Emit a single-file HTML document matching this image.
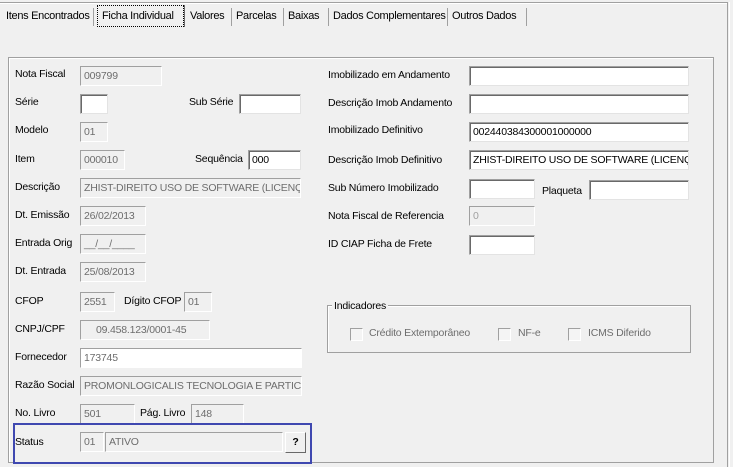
<!DOCTYPE html>
<html><head><meta charset="utf-8"><style>
*{box-sizing:border-box;margin:0;padding:0}
body{width:733px;height:467px;background:#f0f0f0;font-family:"Liberation Sans",sans-serif;font-size:10.5px;letter-spacing:-0.2px;color:#000;position:relative;overflow:hidden}
.a{position:absolute;white-space:nowrap}
.l{position:absolute;white-space:nowrap;line-height:13px}
.i{position:absolute;height:20px;border:1px solid;border-color:#a0a0a0 #e3e3e3 #e3e3e3 #a0a0a0;background:#fff;box-shadow:inset 1px 1px 0 #696969;padding:3px 0 0 3px;line-height:13px;overflow:hidden;white-space:nowrap}
.d{background:#f0f0f0;color:#6d6d6d;box-shadow:none;border-color:#a0a0a0 #fff #fff #a0a0a0}
.tab{position:absolute;top:8px;height:18px;line-height:16px;padding:0 4px;border-right:1px solid #a0a0a0;white-space:nowrap;overflow:hidden;font-size:11px;letter-spacing:-0.3px}
.cb{position:absolute;width:13px;height:13px;border:1px solid #a0a0a0;background:#f4f4f4;border-bottom-color:#fff;border-right-color:#fff}
.g{color:#6d6d6d}
</style></head><body>
<div class="a" style="left:0;top:2px;width:728px;height:1px;background:#a0a0a0"></div>
<div class="a" style="left:0;top:3px;width:728px;height:1px;background:#fff"></div>
<div class="a" style="left:727px;top:2px;width:1px;height:465px;background:#a0a0a0"></div>
<div class="a" style="left:729px;top:2px;width:1px;height:465px;background:#fff"></div>

<div class="tab" style="left:2px;width:92px">Itens Encontrados</div>
<div class="a" style="left:97px;top:5px;width:87px;height:22px;border:1px dotted #000;background:#f0f0f0;padding:2px 0 0 4px;line-height:16px;font-size:11px;letter-spacing:-0.3px">Ficha Individual</div>
<div class="a" style="left:184px;top:5px;width:1px;height:22px;background:#696969"></div>
<div class="tab" style="left:186px;width:46px">Valores</div>
<div class="tab" style="left:232px;width:52px">Parcelas</div>
<div class="tab" style="left:284px;width:45px">Baixas</div>
<div class="tab" style="left:329px;width:119px">Dados Complementares</div>
<div class="tab" style="left:448px;width:79px">Outros Dados</div>

<div class="a" style="left:8px;top:57px;width:706px;height:406px;border:1px solid #a0a0a0;box-shadow:inset 1px 1px 0 #fff"></div>

<div class="l" style="left:15px;top:68px">Nota Fiscal</div><div class="i d" style="left:80px;top:66px;width:82px">009799</div>
<div class="l" style="left:15px;top:96px">Série</div><div class="i" style="left:80px;top:94px;width:28px"></div>
<div class="l" style="left:189px;top:96px">Sub Série</div><div class="i" style="left:239px;top:94px;width:62px"></div>
<div class="l" style="left:15px;top:124px">Modelo</div><div class="i d" style="left:80px;top:122px;width:28px">01</div>
<div class="l" style="left:15px;top:153px">Item</div><div class="i d" style="left:80px;top:150px;width:45px">000010</div>
<div class="l" style="left:195px;top:153px">Sequência</div><div class="i" style="left:248px;top:150px;width:53px">000</div>
<div class="l" style="left:15px;top:181px">Descrição</div><div class="i d" style="left:80px;top:178px;width:221px">ZHIST-DIREITO USO DE SOFTWARE (LICENÇ</div>
<div class="l" style="left:15px;top:209px">Dt. Emissão</div><div class="i d" style="left:80px;top:206px;width:66px">26/02/2013</div>
<div class="l" style="left:15px;top:237px">Entrada Orig</div><div class="i d" style="left:80px;top:234px;width:66px">__/__/____</div>
<div class="l" style="left:15px;top:265px">Dt. Entrada</div><div class="i d" style="left:80px;top:262px;width:66px">25/08/2013</div>
<div class="l" style="left:15px;top:295px">CFOP</div><div class="i d" style="left:80px;top:292px;width:35px">2551</div>
<div class="l" style="left:124px;top:295px">Dígito CFOP</div><div class="i d" style="left:184px;top:292px;width:28px">01</div>
<div class="l" style="left:15px;top:323px">CNPJ/CPF</div><div class="i d" style="left:80px;top:320px;width:130px;padding-left:15px">09.458.123/0001-45</div>
<div class="l" style="left:15px;top:351px">Fornecedor</div><div class="i d" style="left:80px;top:348px;width:222px;background:#fff">173745</div>
<div class="l" style="left:15px;top:379px">Razão Social</div><div class="i d" style="left:80px;top:376px;width:222px">PROMONLOGICALIS TECNOLOGIA E PARTICPA</div>
<div class="l" style="left:15px;top:407px">No. Livro</div><div class="i d" style="left:80px;top:404px;width:55px">501</div>
<div class="l" style="left:140px;top:407px">Pág. Livro</div><div class="i d" style="left:191px;top:404px;width:53px">148</div>

<div class="a" style="left:13px;top:423px;width:299px;height:41px;border:2px solid #3f48b0"></div>
<div class="l" style="left:15px;top:436px">Status</div>
<div class="i d" style="left:80px;top:432px;width:24px">01</div>
<div class="i d" style="left:105px;top:432px;width:178px">ATIVO</div>
<div class="a" style="left:285px;top:432px;width:21px;height:21px;border:1px solid;border-color:#fff #696969 #696969 #fff;background:#f0f0f0;text-align:center;line-height:18px;font-weight:bold">?</div>

<div class="l" style="left:328px;top:69px">Imobilizado em Andamento</div><div class="i" style="left:469px;top:66px;width:220px"></div>
<div class="l" style="left:328px;top:97px">Descrição Imob Andamento</div><div class="i" style="left:469px;top:94px;width:220px"></div>
<div class="l" style="left:328px;top:124px">Imobilizado Definitivo</div><div class="i" style="left:469px;top:122px;width:220px">002440384300001000000</div>
<div class="l" style="left:328px;top:154px">Descrição Imob Definitivo</div><div class="i" style="left:469px;top:150px;width:220px">ZHIST-DIREITO USO DE  SOFTWARE (LICENÇA</div>
<div class="l" style="left:328px;top:182px">Sub Número Imobilizado</div><div class="i" style="left:469px;top:179px;width:66px"></div>
<div class="l" style="left:542px;top:185px">Plaqueta</div><div class="i" style="left:589px;top:180px;width:100px"></div>
<div class="l" style="left:328px;top:210px">Nota Fiscal de Referencia</div><div class="i d" style="left:469px;top:206px;width:66px;color:#a0a0a0">0</div>
<div class="l" style="left:328px;top:238px">ID CIAP Ficha de Frete</div><div class="i" style="left:469px;top:235px;width:66px"></div>

<div class="a" style="left:327px;top:305px;width:364px;height:48px;border:1px solid #a0a0a0;box-shadow:inset 1px 1px 0 #fff"></div>
<div class="l" style="left:332px;top:300px;background:#f0f0f0;padding:0 2px">Indicadores</div>
<div class="cb" style="left:350px;top:328px"></div><div class="l g" style="left:369px;top:327px">Crédito Extemporâneo</div>
<div class="cb" style="left:498px;top:328px"></div><div class="l g" style="left:518px;top:327px">NF-e</div>
<div class="cb" style="left:568px;top:328px"></div><div class="l g" style="left:588px;top:327px">ICMS Diferido</div>
</body></html>
